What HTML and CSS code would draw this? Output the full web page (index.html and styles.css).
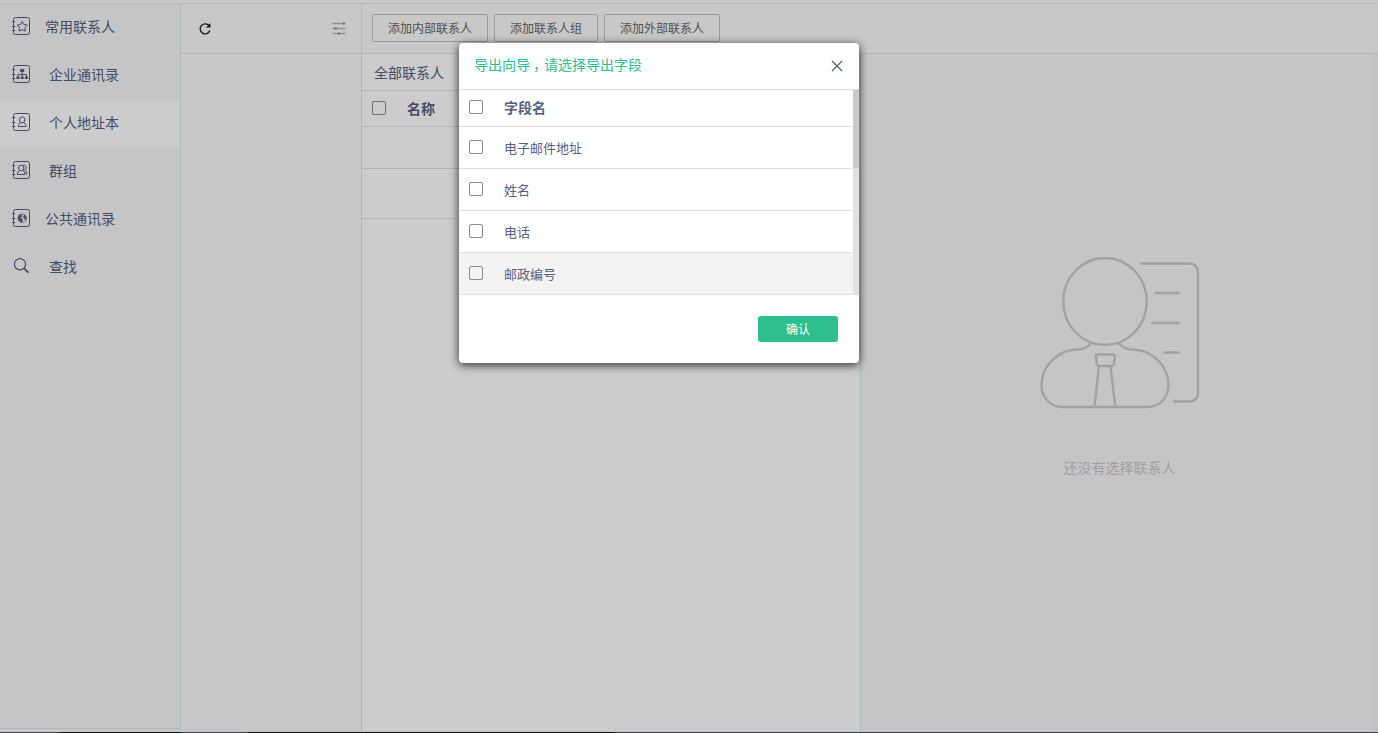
FILE: index.html
```
<!DOCTYPE html>
<html lang="zh-CN">
<head>
    <meta charset="UTF-8">
    <meta name="viewport" content="width=device-width, initial-scale=1.0">
    <title>个人地址本</title>
    <link rel="stylesheet" href="styles.css">
</head>
<body>
    <svg width="0" height="0" class="symbols">
        <symbol id="book" viewBox="0 0 20 20">
            <rect x="1.500" y="1.500" width="16" height="17" rx="2"/>
            <path d="M.2 5.500h3M.2 10.500h3M.2 14.500h3"/>
        </symbol>
    </svg>

    <div class="page">
        <nav class="sidebar">
            <a class="item near">
                <svg class="icon" viewBox="0 0 20 20"><use href="#book"/><g class="inner"><path d="M11 5.400l1.700 3.100 3.400.6-2.400 2.500.5 3.500-3.200-1.500-3.200 1.500.5-3.500-2.400-2.500 3.400-.6z"/></g></svg>
                <span>常用联系人</span>
            </a>
            <a class="item">
                <svg class="icon" viewBox="0 0 20 20"><use href="#book"/><g class="inner"><path d="M11 7.500v5M6.700 13v-2.500h8.600V13"/><path class="solid" d="M9 5h4v3H9zM5.300 12.500h3v2.500h-3zM9.500 12.500h3v2.500h-3zM13.700 12.500h3v2.500h-3z"/></g></svg>
                <span>企业通讯录</span>
            </a>
            <a class="item active">
                <svg class="icon" viewBox="0 0 20 20"><use href="#book"/><g class="inner"><ellipse cx="11" cy="7.900" rx="2.700" ry="3"/><path d="M9.500 10.500c-1.500.9-2.300 2-2.300 4h7.600c0-2-.8-3.100-2.300-4"/></g></svg>
                <span>个人地址本</span>
            </a>
            <a class="item">
                <svg class="icon" viewBox="0 0 20 20"><use href="#book"/><g class="inner"><circle cx="10" cy="8" r="2.700"/><path d="M8.700 10.300c-1.600.9-2.500 2-2.500 4.200h7.500c0-2.200-.9-3.300-2.400-4.200M12 5.200c3.200-.6 3.700 3.500 1.500 5 1.500.6 2.200 1.800 2.200 3.600H14"/></g></svg>
                <span>群组</span>
            </a>
            <a class="item near">
                <svg class="icon" viewBox="0 0 20 20"><use href="#book"/><g class="inner"><circle class="thin" cx="11" cy="10.200" r="4.300"/><path class="solid" d="M6.800 9C7.300 7 9 5.800 11.500 5.900L10.300 7.500l1 1-2 1.500 2.500 1.300-1 3.100C8.300 14.300 6.300 12 6.800 9zM12.800 6.500c1.700.7 2.600 2.400 2.500 4.200l-1.200 1.700-1-1.900-1.300-.6.500-1.500z"/></g></svg>
                <span>公共通讯录</span>
            </a>
            <a class="item">
                <svg class="icon" viewBox="0 0 20 20"><circle cx="8" cy="8.300" r="5.600" stroke-width="1.200"/><path d="M12 12.400l4.300 4.300" stroke-width="1.800"/></svg>
                <span>查找</span>
            </a>
        </nav>

        <section class="groups">
            <div class="bar groups-bar">
                <svg class="refresh" viewBox="0 0 14 14"><path d="M11.500 4.300A5 5 0 1 0 11.900 8.600"/><path class="arrow" d="M12.500 1v4.500H8z"/></svg>
                <svg class="sliders" viewBox="0 0 14 14"><path d="M.5 1.500h13M.5 6.500h13M.5 11.500h13"/><path class="knob" d="M11 1.500h1.500M3 6.500h1.500M6 11.500h1.500"/></svg>
            </div>
        </section>

        <section class="main">
            <div class="bar">
                <button class="btn">添加内部联系人</button>
                <button class="btn short">添加联系人组</button>
                <button class="btn">添加外部联系人</button>
            </div>
            <div class="content">
                <div class="list">
                    <div class="crumb">全部联系人</div>
                    <div class="head"><i class="check"></i><b>名称</b></div>
                    <div class="row"></div>
                    <div class="row tall"></div>
                </div>
                <div class="detail">
                    <svg class="empty" width="162" height="154" viewBox="1039 256 162 154">
                        <ellipse cx="1105" cy="301.500" rx="41.800" ry="43.500"/>
                        <path d="M1091 343.500c-4 4.500-7 6-13 6-20 0-36.500 16-36.500 36 0 12 9 21.500 21 21.500h85c12 0 21-9.500 21-21.500 0-20-16.500-36-36.500-36-6 0-9-1.500-13-6"/>
                        <path d="M1096.500 354.500h17q1.500 0 1.300 1.500l-1 8.500q-.3 1.500-2 1.500h-13q-1.700 0-2-1.500l-1-8.500q-.2-1.500 1.200-1.500zM1099 366l-4.500 40.500M1110.500 366l4.800 40.500"/>
                        <path d="M1141 263.500h47.500q9.500 0 9.500 9.500v119q0 9.500-9.500 9.500H1174M1155.500 293h23M1152 323h26.500M1164.500 352.500h14"/>
                    </svg>
                    <p>还没有选择联系人</p>
                </div>
            </div>
        </section>
    </div>
    <div class="taskbar"></div>
    <div class="mask"></div>

    <div class="dialog">
        <div class="dialog-title">
            <span>导出向导<span class="comma">，</span>请选择导出字段</span>
            <svg class="close" width="12" height="12" viewBox="0 0 12 12"><path d="M1 1l10 10M11 1L1 11"/></svg>
        </div>
        <div class="fields">
            <div class="field-list">
                <div class="field field-head"><i class="check"></i><b>字段名</b></div>
                <div class="field"><i class="check"></i><span>电子邮件地址</span></div>
                <div class="field"><i class="check"></i><span>姓名</span></div>
                <div class="field"><i class="check"></i><span>电话</span></div>
                <div class="field hover"><i class="check"></i><span>邮政编号</span></div>
            </div>
            <div class="scroll"><div class="thumb"></div></div>
        </div>
        <div class="dialog-foot">
            <button class="confirm">确认</button>
        </div>
    </div>
</body>
</html>
```
FILE: styles.css
```
* {
    box-sizing: border-box;
}
body {
    margin: 0;
    height: 733px;
    display: flex;
    flex-direction: column;
    position: relative;
    overflow: hidden;
    background: #fafaf8;
    font-family: "Noto Sans CJK SC", sans-serif;
    font-size: 14px;
    line-height: 20px;
    color: #566080;
}
svg {
    fill: none;
    stroke: #566080;
    flex: none;
}
.symbols {
    position: absolute;
}
.page {
    display: flex;
    height: 732px;
    padding-top: 3px;
    padding-bottom: 1px;
}
.sidebar {
    width: 181px;
    height: 726px;
    background: #f7f7f7;
    border-top: 1px solid #e6e6e5;
    border-right: 1px solid #dae6e2;
    border-bottom: 1px solid #dae6e2;
}
.item {
    display: flex;
    align-items: center;
    height: 48px;
    padding: 0 0 4px 12px;
}
.item span {
    margin-left: 17px;
}
.item.near span {
    margin-left: 13px;
}
.item.active {
    background: #fff;
}
.icon {
    width: 20px;
    height: 20px;
}
.icon .inner {
    transform: translateX(-0.8px);
}
.icon .solid {
    fill: #566080;
    stroke: none;
}
.icon .thin {
    stroke-width: 0.6;
}
.groups {
    width: 181px;
    border-right: 1px solid #dae6e2;
}
.bar {
    display: flex;
    align-items: center;
    gap: 6px;
    height: 51px;
    padding: 0 10px 1px;
    border-top: 1px solid #e6e6e5;
    border-bottom: 1px solid #dae6e2;
}
.groups-bar {
    justify-content: space-between;
    padding: 0 15px 0 17px;
}
.refresh {
    width: 14px;
    height: 14px;
    stroke: #222;
    stroke-width: 1.4;
}
.refresh .arrow {
    fill: #222;
    stroke: none;
}
.sliders {
    width: 14px;
    height: 14px;
    stroke: #b8b8b8;
    stroke-width: 1.6;
}
.sliders .knob {
    stroke: #777;
    stroke-width: 2;
}
.main {
    flex: 1;
    display: flex;
    flex-direction: column;
}
.btn {
    width: 116px;
    height: 28px;
    padding: 0 0 2px;
    border: 1px solid #c4c4c2;
    border-radius: 2px;
    background: none;
    font-family: inherit;
    font-size: 12px;
    color: #666;
}
.btn.short {
    width: 104px;
}
.content {
    flex: 1;
    display: flex;
}
.list {
    width: 499px;
    background: #fff;
    border-right: 1px solid #dae6e2;
}
.crumb {
    height: 37px;
    padding: 8px 12px 0;
    border-bottom: 1px solid #dae6e2;
}
.head {
    display: flex;
    align-items: center;
    height: 36px;
    padding: 0 0 2px 10px;
    border-bottom: 1px solid #dae6e2;
}
.head b {
    margin-left: 21px;
}
.check {
    width: 14px;
    height: 14px;
    border: 1px solid #8c8c8c;
    border-radius: 2px;
    flex: none;
}
.row {
    height: 42px;
    border-bottom: 1px solid #dae6e2;
}
.row.tall {
    height: 50px;
}
.detail {
    flex: 1;
    display: flex;
    flex-direction: column;
    align-items: center;
    padding-top: 202px;
    background: linear-gradient(to left, #f1f1f1, #f7f7f7 10px);
}
.empty {
    stroke: #cbcbcb;
    stroke-width: 2.4;
    stroke-linecap: round;
}
.detail p {
    margin: 47px 0 0;
    color: #c8c8c8;
}
.taskbar {
    height: 1px;
    background: linear-gradient(to right, #335b74 60px, #0e1319 61px, #0e1319 180px, #335b74 181px, #335b74 247px, #0e1319 248px, #0e1319 614px, #2b5068 615px);
}
.mask {
    position: absolute;
    inset: 0;
    background: rgba(0, 0, 0, 0.2);
}
.dialog {
    position: absolute;
    left: 459px;
    top: 43px;
    width: 400px;
    height: 320px;
    background: #fff;
    border-radius: 4px;
    box-shadow: 0 2px 10px rgba(0, 0, 0, 0.8);
}
.dialog-title {
    display: flex;
    align-items: flex-start;
    justify-content: space-between;
    height: 47px;
    padding: 11px 16px 0 15px;
    border-bottom: 1px solid #d8e4e0;
    color: #2dbf8e;
}
/* half-width comma, centered in its cell */
.comma {
    font-feature-settings: "halt";
    padding: 0 4px 0 3px;
}
.close {
    margin-top: 6px;
    stroke-width: 1.3;
}
.fields {
    display: flex;
}
.field-list {
    flex: 1;
}
.field {
    display: flex;
    align-items: center;
    height: 42px;
    padding: 0 0 0 10px;
    border-bottom: 1px solid #d8e4e0;
    font-size: 13px;
}
.field .check {
    margin-bottom: 2px;
}
.field-head {
    height: 37px;
    font-size: 14px;
}
.field-head b {
    margin-bottom: 2px;
}
.field span,
.field b {
    margin-left: 21px;
}
.field.hover {
    background: #f3f3f3;
}
.scroll {
    width: 6px;
    background: #e1e1e1;
}
.thumb {
    height: 78px;
    background: #c9c9c9;
}
.dialog-foot {
    display: flex;
    justify-content: flex-end;
    padding: 21px 21px 0;
}
.confirm {
    width: 80px;
    height: 26px;
    padding: 0 0 2px;
    border: none;
    border-radius: 3px;
    background: #2dbf8e;
    color: #fff;
    font-family: inherit;
    font-size: 12px;
}
```
